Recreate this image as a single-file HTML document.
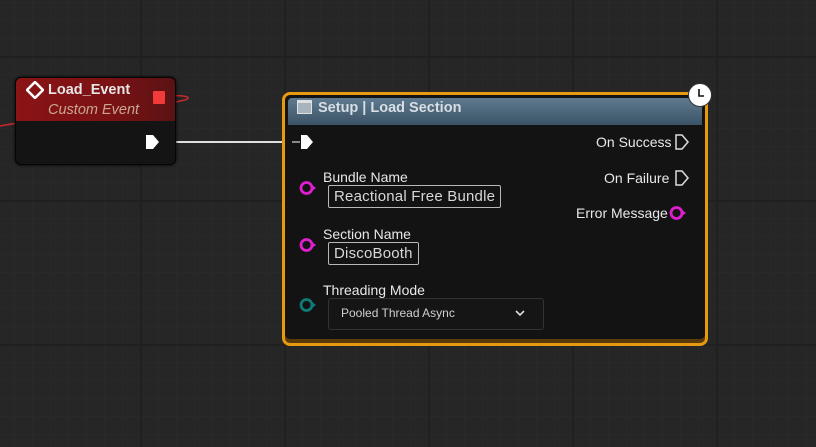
<!DOCTYPE html>
<html><head><meta charset="utf-8"><style>
html,body{margin:0;padding:0;}
body{width:816px;height:447px;overflow:hidden;position:relative;font-family:"Liberation Sans",sans-serif;
background-color:#262626;
background-image:
linear-gradient(to right,#202020 0,#202020 2px,transparent 2px),
linear-gradient(to bottom,#202020 0,#202020 2px,transparent 2px),
linear-gradient(to right,#292929 0,#292929 1px,transparent 1px),
linear-gradient(to bottom,#292929 0,#292929 1px,transparent 1px);
background-size:144px 144px,144px 144px,18px 18px,18px 18px;
background-position:140px 56px,140px 56px,140px 56px,140px 56px;}
.abs{position:absolute;}
.t{color:#e8e8e8;font-size:14px;white-space:nowrap;}
.box{position:absolute;border:1.5px solid #b8b8b8;border-radius:2px;color:#d8d8d8;font-size:15px;padding:0 5px;height:21px;line-height:21px;letter-spacing:0.2px;}
</style></head><body>
<svg class="abs" style="left:0;top:0" width="816" height="447">
 <path d="M0 126 C60 115 150 108 185 100 C195 96 180 95 160 96" stroke="#c8282e" stroke-width="1.5" fill="none"/>
 <line x1="160" y1="142" x2="300" y2="142" stroke="#e0e0e0" stroke-width="2"/>
</svg>
<div class="abs" style="left:15px;top:77px;width:159px;height:86px;border-radius:6px;background:#141414;box-shadow:0 0 3px #000;overflow:hidden;border:1px solid #050505;">
 <div style="height:43px;background:linear-gradient(to right,#8a1416,#7a1114 60%,#5a1214);"></div>
</div>
<svg class="abs" style="left:26px;top:81px" width="18" height="18"><path d="M9 1 L17 9 L9 17 L1 9Z" fill="none" stroke="#fff" stroke-width="2.5"/></svg>
<div class="abs t" style="left:48px;top:82px;font-weight:bold;font-size:14.5px;color:#e6e6e6">Load_Event</div>
<div class="abs" style="left:48px;top:102px;font-style:italic;font-size:14.5px;color:#c9a893">Custom Event</div>
<div class="abs" style="left:153px;top:91px;width:12px;height:13px;background:#f23a3a;border-radius:1px"></div>
<svg class="abs" style="left:145px;top:134px" width="16" height="16"><path d="M1 1 H8 L14 8 L8 15 H1Z" fill="#fff"/></svg>
<div class="abs" style="left:282px;top:92px;width:420px;height:248px;border:3px solid #e79a10;border-radius:8px;background:#121312;box-shadow:inset 0 -4px 0 #5a3a08;">
 <div style="margin:3px 3px 0 3px;height:27px;border-radius:4px 4px 0 0;background:linear-gradient(to bottom,#5f7a8f,#3b5366);"></div>
</div>
<div class="abs" style="left:297px;top:100px;width:15px;height:14px;background:#a8b4bd;border:1px solid #e0e0e0;border-top-width:3px;box-sizing:border-box"></div>
<div class="abs t" style="left:318px;top:100px;font-weight:bold;color:#d8dee4;font-size:14.5px">Setup | Load Section</div>
<div class="abs" style="left:688px;top:83px;width:24px;height:24px;border-radius:50%;background:#fff;border:1px solid #333;box-sizing:border-box"></div>
<svg class="abs" style="left:688px;top:83px" width="24" height="24"><path d="M11 6 V13 H16" stroke="#111" stroke-width="1.6" fill="none"/></svg>
<svg class="abs" style="left:292px;top:134px" width="24" height="16"><line x1="0" y1="8" x2="8" y2="8" stroke="#888" stroke-width="2"/><path d="M9 1 H15 L21 8 L15 15 H9Z" fill="#fff"/></svg>
<div class="abs t" style="left:596px;top:134px">On Success</div>
<svg class="abs" style="left:674px;top:133px" width="16" height="18"><path d="M2 2 H8 L14 9 L8 16 H2Z" fill="none" stroke="#ddd" stroke-width="1.5"/></svg>
<div class="abs t" style="left:604px;top:170px">On Failure</div>
<svg class="abs" style="left:674px;top:169px" width="16" height="18"><path d="M2 2 H8 L14 9 L8 16 H2Z" fill="none" stroke="#ddd" stroke-width="1.5"/></svg>
<div class="abs t" style="left:576px;top:205px">Error Message</div>
<svg class="abs" style="left:668px;top:205px" width="22" height="16"><circle cx="8.5" cy="8" r="5.5" fill="none" stroke="#e01ed0" stroke-width="2.8"/><path d="M14 5 L18 8 L14 11Z" fill="#e01ed0"/></svg>

<svg class="abs" style="left:298px;top:180px" width="22" height="16"><circle cx="8.5" cy="8" r="5.5" fill="none" stroke="#e01ed0" stroke-width="2.8"/><path d="M14 5 L18 8 L14 11Z" fill="#e01ed0"/></svg>
<div class="abs t" style="left:323px;top:169px">Bundle Name</div>
<div class="box" style="left:328px;top:185px">Reactional Free Bundle</div>

<svg class="abs" style="left:298px;top:237px" width="22" height="16"><circle cx="8.5" cy="8" r="5.5" fill="none" stroke="#e01ed0" stroke-width="2.8"/><path d="M14 5 L18 8 L14 11Z" fill="#e01ed0"/></svg>
<div class="abs t" style="left:323px;top:226px">Section Name</div>
<div class="box" style="left:328px;top:242px">DiscoBooth</div>

<svg class="abs" style="left:298px;top:297px" width="22" height="16"><circle cx="8.5" cy="8" r="5.5" fill="none" stroke="#0f7a78" stroke-width="2.8"/><path d="M14 5 L18 8 L14 11Z" fill="#0f7a78"/></svg>
<div class="abs t" style="left:323px;top:282px">Threading Mode</div>
<div class="abs" style="left:328px;top:298px;width:214px;height:30px;border:1px solid #333;border-radius:3px;background:#151515;"></div>
<div class="abs" style="left:341px;top:306px;color:#cfcfcf;font-size:12px">Pooled Thread Async</div>
<svg class="abs" style="left:514px;top:308px" width="12" height="10"><path d="M2 3 L6 7 L10 3" stroke="#ddd" stroke-width="1.6" fill="none"/></svg>
</body></html>
